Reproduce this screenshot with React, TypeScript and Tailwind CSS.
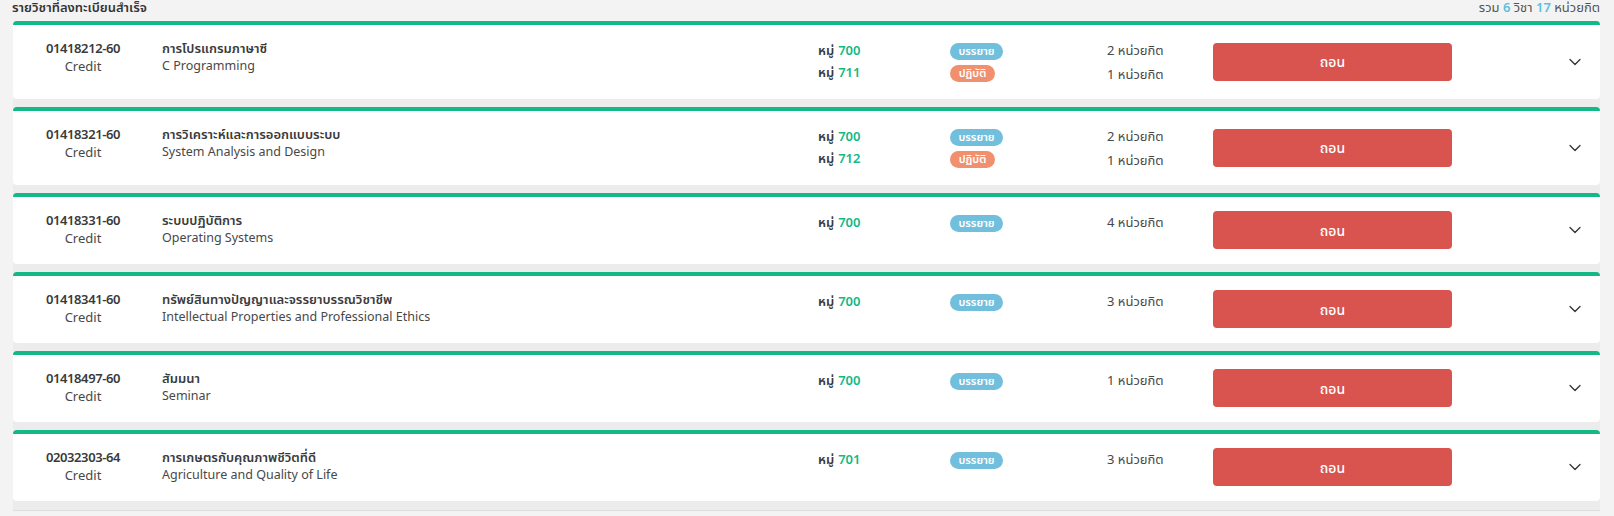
import { ChevronDown } from 'lucide-react'

type Section = {
    group: string
    type: 'lecture' | 'lab'
    credit: number
}

type Course = {
    code: string
    nameTh: string
    nameEn: string
    sections: Section[]
}

const courses: Course[] = [
    {
        code: '01418212-60',
        nameTh: 'การโปรแกรมภาษาซี',
        nameEn: 'C Programming',
        sections: [
            { group: '700', type: 'lecture', credit: 2 },
            { group: '711', type: 'lab', credit: 1 },
        ],
    },
    {
        code: '01418321-60',
        nameTh: 'การวิเคราะห์และการออกแบบระบบ',
        nameEn: 'System Analysis and Design',
        sections: [
            { group: '700', type: 'lecture', credit: 2 },
            { group: '712', type: 'lab', credit: 1 },
        ],
    },
    {
        code: '01418331-60',
        nameTh: 'ระบบปฏิบัติการ',
        nameEn: 'Operating Systems',
        sections: [{ group: '700', type: 'lecture', credit: 4 }],
    },
    {
        code: '01418341-60',
        nameTh: 'ทรัพย์สินทางปัญญาและจรรยาบรรณวิชาชีพ',
        nameEn: 'Intellectual Properties and Professional Ethics',
        sections: [{ group: '700', type: 'lecture', credit: 3 }],
    },
    {
        code: '01418497-60',
        nameTh: 'สัมมนา',
        nameEn: 'Seminar',
        sections: [{ group: '700', type: 'lecture', credit: 1 }],
    },
    {
        code: '02032303-64',
        nameTh: 'การเกษตรกับคุณภาพชีวิตที่ดี',
        nameEn: 'Agriculture and Quality of Life',
        sections: [{ group: '701', type: 'lecture', credit: 3 }],
    },
]

function CourseCard({ course }: { course: Course }) {
    return (
        <div className="flex rounded-[4px] border-t-4 border-[#12b886] bg-white pt-[14px] pb-[15px]">
            <div className="w-[140px] shrink-0 pb-[2px] text-center">
                <div className="h-[18px] overflow-hidden text-[13px] font-semibold leading-[18px] tracking-[-0.4px] text-[#3a3a3a]">
                    {course.code}
                </div>
                <div className="h-[18px] overflow-hidden text-[13px] leading-[18px] text-[#484848]">Credit</div>
            </div>

            <div className="ml-[9px] w-[656px] shrink-0">
                <div className="h-[18px] text-[13px] font-semibold leading-[18px] text-[#3a3a3a]">
                    {course.nameTh}
                </div>
                <div className="h-[18px] text-[12.5px] leading-[18px] text-[#484848]">{course.nameEn}</div>
            </div>

            <div className="w-[132px] shrink-0 pt-px">
                {course.sections.map((s) => (
                    <div key={s.group} className="flex h-[22px] items-center gap-1 text-[13px] font-semibold text-[#3a3a3a]">
                        หมู่ <span className="text-[#12b886]">{s.group}</span>
                    </div>
                ))}
            </div>

            <div className="w-[157px] shrink-0 pt-px">
                {course.sections.map((s) => (
                    <div key={s.group} className="flex h-[22px] items-center">
                        {s.type === 'lecture' ? (
                            <span className="flex h-[17px] w-[53px] items-center justify-center rounded-full bg-[#72bfdd] text-[11px] font-semibold text-white">
                                บรรยาย
                            </span>
                        ) : (
                            <span className="flex h-[17px] w-[45px] items-center justify-center rounded-full bg-[#f0906e] text-[11px] font-semibold text-white">
                                ปฏิบัติ
                            </span>
                        )}
                    </div>
                ))}
            </div>

            <div className="w-[106px] shrink-0 pt-px">
                {course.sections.map((s, i) => (
                    <div
                        key={s.group}
                        className={`flex h-[22px] items-center text-[13px] text-[#484848] ${i > 0 ? 'pt-[3px]' : ''}`}
                    >
                        {s.credit} หน่วยกิต
                    </div>
                ))}
            </div>

            <button className="flex h-[38px] w-[239px] shrink-0 items-center justify-center self-center rounded-[4px] bg-[#d9534f] text-[14px] font-medium text-white">
                ถอน
            </button>

            <div className="flex flex-1 items-center justify-end self-center pr-[15px]">
                <ChevronDown size={20} strokeWidth={1.5} className="text-[#333]" />
            </div>
        </div>
    )
}

export default function App() {
    return (
        <div
            className="min-h-screen bg-[#f3f3f3]"
            style={{ fontFamily: '"Noto Sans", "Noto Sans Thai", "Liberation Sans", sans-serif' }}
        >
            <div className="ml-[13px] w-[1587px]">
                <div className="flex h-[21px] items-start justify-between">
                    <div className="-ml-px h-[15px] text-[13px] font-semibold leading-[15px] text-[#333]">
                        รายวิชาที่ลงทะเบียนสำเร็จ
                    </div>
                    <div className="h-[15px] text-[13px] leading-[15px] text-[#555]">
                        รวม <span className="font-semibold text-[#5bc0de]">6</span> วิชา{' '}
                        <span className="font-semibold text-[#5bc0de]">17</span> หน่วยกิต
                    </div>
                </div>

                <div className="flex flex-col gap-2 border-b border-[#dedede] bg-[#ececec] pb-[9px]">
                    {courses.map((c) => (
                        <CourseCard key={c.code} course={c} />
                    ))}
                </div>
            </div>
        </div>
    )
}
